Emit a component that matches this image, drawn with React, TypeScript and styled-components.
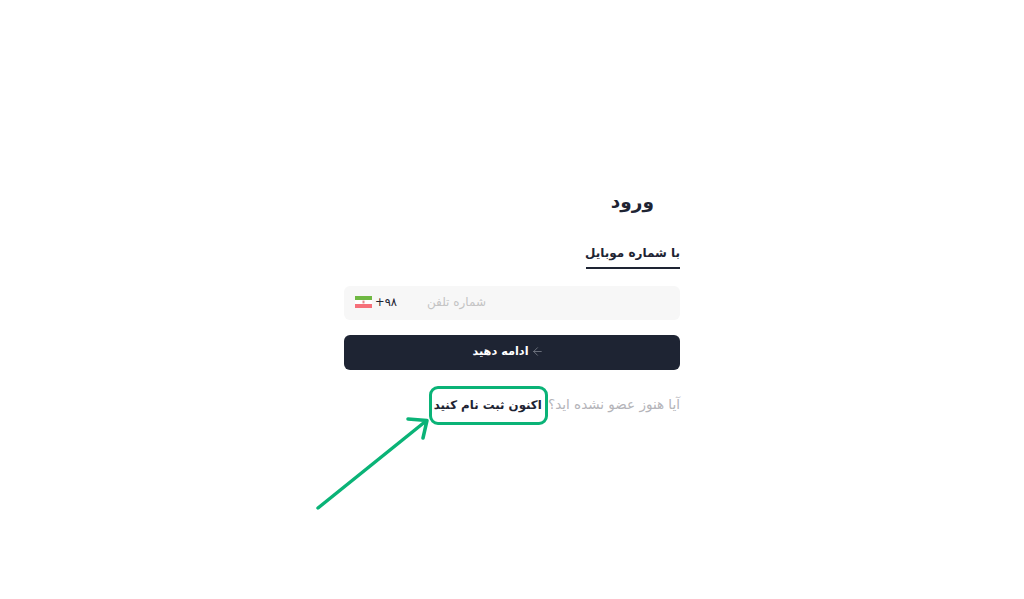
import styled, { createGlobalStyle } from "styled-components";
import { ArrowLeft } from "lucide-react";

const COLOR_DARK = "#1e2433";
const COLOR_GREEN = "#0ab377";

const GlobalStyle = createGlobalStyle`
  html, body {
    margin: 0;
    padding: 0;
    background: #ffffff;
  }
  * {
    box-sizing: border-box;
  }
`;

const Page = styled.div`
  position: relative;
  width: 1024px;
  height: 599px;
  overflow: hidden;
  padding-top: 186px;
  display: flex;
  justify-content: center;
  font-family: "DejaVu Sans", "Noto Sans", sans-serif;
`;

const Form = styled.form`
  width: 336px;
  display: flex;
  flex-direction: column;
  direction: rtl;
`;

const Title = styled.h1`
  margin: 0 26px 0 0;
  font-size: 18.5px;
  line-height: 32px;
  font-weight: 700;
  color: ${COLOR_DARK};
`;

const Tab = styled.div`
  align-self: flex-start;
  width: 94px;
  margin-top: 20px;
  height: 31px;
  font-size: 12px;
  line-height: 30px;
  font-weight: 700;
  white-space: nowrap;
  color: ${COLOR_DARK};
  border-bottom: 2px solid ${COLOR_DARK};
`;

const PhoneField = styled.div`
  margin-top: 17px;
  height: 34px;
  display: flex;
  align-items: center;
  justify-content: space-between;
  background: #f7f7f7;
  border-radius: 6px;
  padding: 0 194px 3px 11px;
`;

const Placeholder = styled.span`
  font-size: 12px;
  color: #c4c4c4;
  white-space: nowrap;
`;

const Prefix = styled.span`
  display: flex;
  align-items: center;
  gap: 3px;
  direction: ltr;
  font-size: 11.5px;
  color: ${COLOR_DARK};
`;

const SubmitButton = styled.button`
  margin-top: 15px;
  height: 35px;
  border: 0;
  border-radius: 6px;
  background: ${COLOR_DARK};
  color: #ffffff;
  font-family: inherit;
  font-size: 11.3px;
  font-weight: 700;
  display: flex;
  align-items: center;
  justify-content: center;
  gap: 2px;
  padding: 0 8px 3px 0;

  > svg {
    color: #7b808b;
  }
`;

const SignupRow = styled.p`
  margin: 24px 0 0;
  font-size: 13.5px;
  line-height: 20px;
  color: #b4b4b9;
  white-space: nowrap;
`;

const SignupLink = styled.a`
  margin-inline-start: 2px;
  font-size: 11.8px;
  font-weight: 700;
  color: ${COLOR_DARK};
`;

const Highlight = styled.div`
  position: absolute;
  left: 429px;
  top: 386px;
  width: 119px;
  height: 38.5px;
  border: 3px solid ${COLOR_GREEN};
  border-radius: 9px;
`;

const Annotation = styled.svg`
  position: absolute;
  left: 310px;
  top: 410px;
`;

function IranFlag() {
  return (
    <svg width="17" height="12" viewBox="0 0 17 12">
      <rect width="17" height="4" fill="#6fb843" />
      <rect y="4" width="17" height="4" fill="#ffffff" />
      <rect y="8" width="17" height="4" fill="#f6707a" />
      <rect x="7.5" y="4.6" width="2" height="2.8" fill="#e58a8e" />
    </svg>
  );
}

export default function App() {
  return (
    <>
      <GlobalStyle />
      <Page>
        <Form>
          <Title>ورود</Title>
          <Tab>با شماره موبایل</Tab>
          <PhoneField>
            <Placeholder>شماره تلفن</Placeholder>
            <Prefix>
              <IranFlag />
              +۹۸
            </Prefix>
          </PhoneField>
          <SubmitButton type="button">
            <ArrowLeft size={13} strokeWidth={1.5} />
            ادامه دهید
          </SubmitButton>
          <SignupRow>
            آیا هنوز عضو نشده اید؟ <SignupLink>اکنون ثبت نام کنید</SignupLink>
          </SignupRow>
        </Form>
        <Highlight />
        <Annotation width="125" height="105" viewBox="0 0 125 105" fill="none">
          <path
            d="M8 98 L116 11 M98 9 L117 10.5 L113 28"
            stroke={COLOR_GREEN}
            strokeWidth="3.5"
            strokeLinecap="round"
            strokeLinejoin="round"
          />
        </Annotation>
      </Page>
    </>
  );
}
